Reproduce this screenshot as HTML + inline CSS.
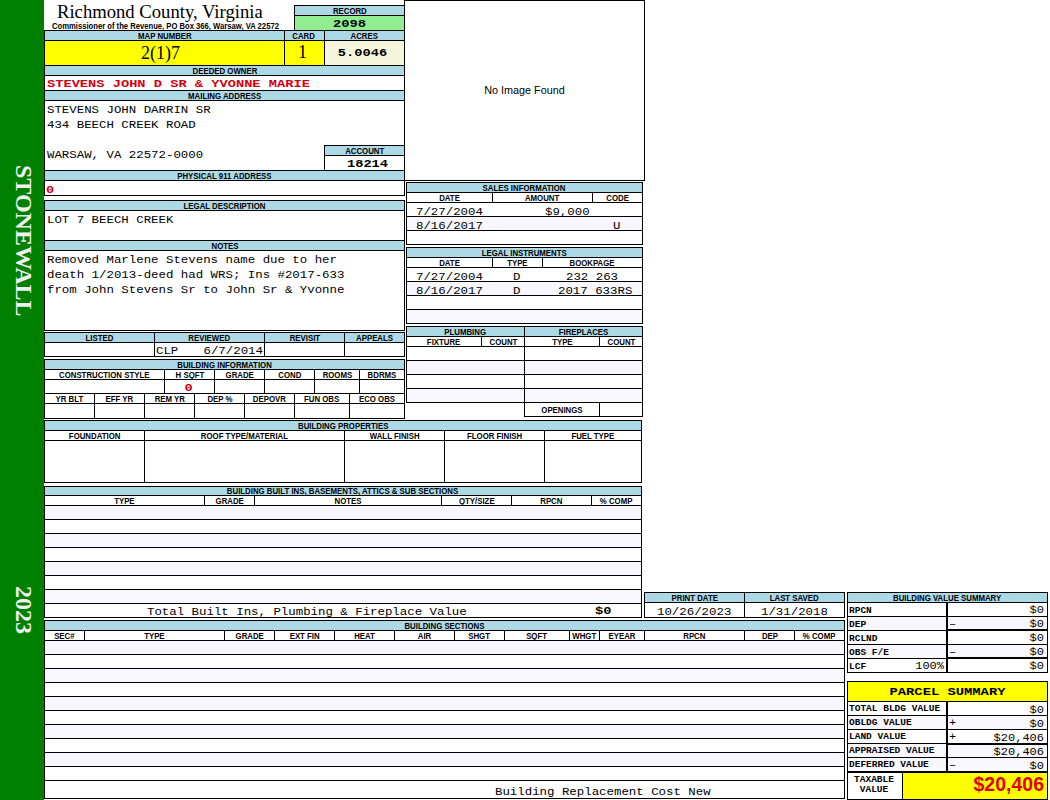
<!DOCTYPE html><html><head><meta charset="utf-8"><style>
*{margin:0;padding:0;box-sizing:border-box}
html,body{width:1050px;height:800px;overflow:hidden;background:#fff}
body{position:relative;font-family:"Liberation Sans",sans-serif}
.b{position:absolute}
.c{position:absolute;display:flex;align-items:center;white-space:nowrap;overflow:visible}
.t{position:absolute;white-space:nowrap}
.h{font-family:"Liberation Sans",sans-serif;font-size:8.7px;font-weight:bold;color:#000}
.h span{display:inline-block;transform:scaleX(0.9)}
.mb{font-family:"Liberation Mono",monospace;font-weight:bold;font-size:13.7px;color:#000}
.mbr{font-family:"Liberation Mono",monospace;font-weight:bold;font-size:13.7px;line-height:14px;color:#D40010}
.mb span,.mbr span{display:inline-block;transform:scaleY(0.85)}
.mono{font-family:"Liberation Mono",monospace;font-size:12.4px;line-height:15px;color:#000}
.mono span{display:inline-block;transform:scaleY(0.89);transform-origin:0 11px}
.ser{font-family:"Liberation Serif",serif;font-size:18px;color:#000}
.title{font-family:"Liberation Serif",serif;font-size:18.65px;line-height:20px;color:#000}
.sub{font-family:"Liberation Sans",sans-serif;font-size:8.5px;font-weight:bold;line-height:10px;color:#000}
.sub span{display:inline-block;transform:scaleX(0.9);transform-origin:0 0}
.noimg{font-family:"Liberation Sans",sans-serif;font-size:10.8px;color:#000}
.lab{font-family:"Liberation Mono",monospace;font-weight:bold;font-size:9.5px;color:#000}
.val{font-family:"Liberation Mono",monospace;font-size:12px;line-height:15px;color:#000}
.val span{display:inline-block;transform:scaleY(0.92);transform-origin:0 11px}
.ps{font-family:"Liberation Mono",monospace;font-weight:bold;font-size:13.8px;color:#000}
.ps span{display:inline-block;transform:scaleY(0.85)}
.tax{font-family:"Liberation Sans",sans-serif;font-weight:bold;font-size:19.5px;line-height:24px;color:#E00000}
.side{position:absolute;font-family:"Liberation Serif",serif;font-weight:bold;font-size:24px;line-height:24px;color:#F0F0F0;writing-mode:vertical-rl;}
</style></head><body>
<div class="b" style="left:0px;top:0px;width:44px;height:800px;background:#008000"></div>
<div class="b" style="left:404px;top:0px;width:241px;height:181px;background:#fff"></div>
<div class="b" style="left:295px;top:6px;width:109px;height:9px;background:#ADD8E6"></div>
<div class="b" style="left:295px;top:16px;width:109px;height:14px;background:#90EE90"></div>
<div class="b" style="left:45px;top:31px;width:359px;height:9px;background:#ADD8E6"></div>
<div class="b" style="left:45px;top:41px;width:239px;height:24px;background:#FFFF00"></div>
<div class="b" style="left:285px;top:41px;width:39px;height:24px;background:#FFFF00"></div>
<div class="b" style="left:325px;top:41px;width:79px;height:24px;background:#F5F5DC"></div>
<div class="b" style="left:45px;top:66px;width:359px;height:9px;background:#ADD8E6"></div>
<div class="b" style="left:45px;top:91px;width:359px;height:9px;background:#ADD8E6"></div>
<div class="b" style="left:325px;top:146px;width:79px;height:9px;background:#ADD8E6"></div>
<div class="b" style="left:45px;top:171px;width:359px;height:9px;background:#ADD8E6"></div>
<div class="b" style="left:45px;top:201px;width:359px;height:9px;background:#ADD8E6"></div>
<div class="b" style="left:45px;top:241px;width:359px;height:9px;background:#ADD8E6"></div>
<div class="b" style="left:45px;top:333px;width:359px;height:9px;background:#ADD8E6"></div>
<div class="b" style="left:45px;top:360px;width:359px;height:9px;background:#ADD8E6"></div>
<div class="b" style="left:407px;top:183px;width:235px;height:9px;background:#ADD8E6"></div>
<div class="b" style="left:407px;top:217px;width:235px;height:13px;background:#F7F7FD"></div>
<div class="b" style="left:407px;top:248px;width:235px;height:9px;background:#ADD8E6"></div>
<div class="b" style="left:407px;top:282px;width:235px;height:13px;background:#F7F7FD"></div>
<div class="b" style="left:407px;top:310px;width:235px;height:13px;background:#F7F7FD"></div>
<div class="b" style="left:407px;top:327px;width:117px;height:9px;background:#ADD8E6"></div>
<div class="b" style="left:525px;top:327px;width:117px;height:9px;background:#ADD8E6"></div>
<div class="b" style="left:407px;top:361px;width:117px;height:13px;background:#F7F7FD"></div>
<div class="b" style="left:525px;top:361px;width:117px;height:13px;background:#F7F7FD"></div>
<div class="b" style="left:407px;top:389px;width:117px;height:13px;background:#F7F7FD"></div>
<div class="b" style="left:525px;top:389px;width:117px;height:13px;background:#F7F7FD"></div>
<div class="b" style="left:45px;top:421px;width:596px;height:9px;background:#ADD8E6"></div>
<div class="b" style="left:45px;top:487px;width:596px;height:8px;background:#ADD8E6"></div>
<div class="b" style="left:45px;top:506px;width:596px;height:13px;background:#F7F7FD"></div>
<div class="b" style="left:45px;top:534px;width:596px;height:13px;background:#F7F7FD"></div>
<div class="b" style="left:45px;top:562px;width:596px;height:13px;background:#F7F7FD"></div>
<div class="b" style="left:45px;top:590px;width:596px;height:13px;background:#F7F7FD"></div>
<div class="b" style="left:645px;top:593px;width:199px;height:9px;background:#ADD8E6"></div>
<div class="b" style="left:45px;top:621px;width:799px;height:9px;background:#ADD8E6"></div>
<div class="b" style="left:45px;top:641px;width:799px;height:13px;background:#F7F7FD"></div>
<div class="b" style="left:45px;top:669px;width:799px;height:13px;background:#F7F7FD"></div>
<div class="b" style="left:45px;top:697px;width:799px;height:13px;background:#F7F7FD"></div>
<div class="b" style="left:45px;top:725px;width:799px;height:13px;background:#F7F7FD"></div>
<div class="b" style="left:45px;top:753px;width:799px;height:13px;background:#F7F7FD"></div>
<div class="b" style="left:848px;top:593px;width:199px;height:9px;background:#ADD8E6"></div>
<div class="b" style="left:848px;top:617px;width:98px;height:13px;background:#F7F7FD"></div>
<div class="b" style="left:948px;top:617px;width:99px;height:13px;background:#F7F7FD"></div>
<div class="b" style="left:848px;top:645px;width:98px;height:13px;background:#F7F7FD"></div>
<div class="b" style="left:948px;top:645px;width:99px;height:13px;background:#F7F7FD"></div>
<div class="b" style="left:848px;top:682px;width:199px;height:19px;background:#FFFF00"></div>
<div class="b" style="left:848px;top:716px;width:98px;height:13px;background:#F7F7FD"></div>
<div class="b" style="left:948px;top:716px;width:99px;height:13px;background:#F7F7FD"></div>
<div class="b" style="left:848px;top:744px;width:98px;height:13px;background:#F7F7FD"></div>
<div class="b" style="left:948px;top:744px;width:99px;height:13px;background:#F7F7FD"></div>
<div class="b" style="left:848px;top:758px;width:98px;height:13px;background:#F7F7FD"></div>
<div class="b" style="left:948px;top:758px;width:99px;height:13px;background:#F7F7FD"></div>
<div class="b" style="left:903px;top:773px;width:144px;height:26px;background:#FFFF00"></div>
<div class="b" style="left:404px;top:0px;width:241px;height:181px;border:1px solid #000"></div>
<div class="b" style="left:294px;top:5px;width:111px;height:26px;border:1px solid #000"></div>
<div class="b" style="left:294px;top:15px;width:111px;height:1px;background:#000"></div>
<div class="b" style="left:44px;top:30px;width:361px;height:166px;border:1px solid #000"></div>
<div class="b" style="left:44px;top:40px;width:361px;height:1px;background:#000"></div>
<div class="b" style="left:284px;top:30px;width:1px;height:36px;background:#000"></div>
<div class="b" style="left:324px;top:30px;width:1px;height:36px;background:#000"></div>
<div class="b" style="left:44px;top:65px;width:361px;height:1px;background:#000"></div>
<div class="b" style="left:44px;top:75px;width:361px;height:1px;background:#000"></div>
<div class="b" style="left:44px;top:90px;width:361px;height:1px;background:#000"></div>
<div class="b" style="left:44px;top:100px;width:361px;height:1px;background:#000"></div>
<div class="b" style="left:324px;top:145px;width:81px;height:26px;border:1px solid #000"></div>
<div class="b" style="left:324px;top:155px;width:81px;height:1px;background:#000"></div>
<div class="b" style="left:44px;top:170px;width:361px;height:1px;background:#000"></div>
<div class="b" style="left:44px;top:180px;width:361px;height:1px;background:#000"></div>
<div class="b" style="left:44px;top:200px;width:361px;height:131px;border:1px solid #000"></div>
<div class="b" style="left:44px;top:210px;width:361px;height:1px;background:#000"></div>
<div class="b" style="left:44px;top:240px;width:361px;height:1px;background:#000"></div>
<div class="b" style="left:44px;top:250px;width:361px;height:1px;background:#000"></div>
<div class="b" style="left:44px;top:332px;width:361px;height:25px;border:1px solid #000"></div>
<div class="b" style="left:44px;top:342px;width:361px;height:1px;background:#000"></div>
<div class="b" style="left:154px;top:332px;width:1px;height:25px;background:#000"></div>
<div class="b" style="left:264px;top:332px;width:1px;height:25px;background:#000"></div>
<div class="b" style="left:344px;top:332px;width:1px;height:25px;background:#000"></div>
<div class="b" style="left:44px;top:359px;width:361px;height:60px;border:1px solid #000"></div>
<div class="b" style="left:44px;top:369px;width:361px;height:1px;background:#000"></div>
<div class="b" style="left:44px;top:379px;width:361px;height:1px;background:#000"></div>
<div class="b" style="left:44px;top:393px;width:361px;height:1px;background:#000"></div>
<div class="b" style="left:44px;top:403px;width:361px;height:1px;background:#000"></div>
<div class="b" style="left:164px;top:369px;width:1px;height:25px;background:#000"></div>
<div class="b" style="left:214px;top:369px;width:1px;height:25px;background:#000"></div>
<div class="b" style="left:264px;top:369px;width:1px;height:25px;background:#000"></div>
<div class="b" style="left:314px;top:369px;width:1px;height:25px;background:#000"></div>
<div class="b" style="left:359px;top:369px;width:1px;height:25px;background:#000"></div>
<div class="b" style="left:94px;top:393px;width:1px;height:26px;background:#000"></div>
<div class="b" style="left:144px;top:393px;width:1px;height:26px;background:#000"></div>
<div class="b" style="left:194px;top:393px;width:1px;height:26px;background:#000"></div>
<div class="b" style="left:244px;top:393px;width:1px;height:26px;background:#000"></div>
<div class="b" style="left:294px;top:393px;width:1px;height:26px;background:#000"></div>
<div class="b" style="left:349px;top:393px;width:1px;height:26px;background:#000"></div>
<div class="b" style="left:406px;top:182px;width:237px;height:63px;border:1px solid #000"></div>
<div class="b" style="left:406px;top:192px;width:237px;height:1px;background:#000"></div>
<div class="b" style="left:406px;top:202px;width:237px;height:1px;background:#000"></div>
<div class="b" style="left:406px;top:216px;width:237px;height:1px;background:#000"></div>
<div class="b" style="left:406px;top:230px;width:237px;height:1px;background:#000"></div>
<div class="b" style="left:492px;top:192px;width:1px;height:11px;background:#000"></div>
<div class="b" style="left:592px;top:192px;width:1px;height:11px;background:#000"></div>
<div class="b" style="left:406px;top:247px;width:237px;height:77px;border:1px solid #000"></div>
<div class="b" style="left:406px;top:257px;width:237px;height:1px;background:#000"></div>
<div class="b" style="left:406px;top:267px;width:237px;height:1px;background:#000"></div>
<div class="b" style="left:406px;top:281px;width:237px;height:1px;background:#000"></div>
<div class="b" style="left:406px;top:295px;width:237px;height:1px;background:#000"></div>
<div class="b" style="left:406px;top:309px;width:237px;height:1px;background:#000"></div>
<div class="b" style="left:492px;top:257px;width:1px;height:11px;background:#000"></div>
<div class="b" style="left:542px;top:257px;width:1px;height:11px;background:#000"></div>
<div class="b" style="left:406px;top:326px;width:119px;height:77px;border:1px solid #000"></div>
<div class="b" style="left:524px;top:326px;width:119px;height:91px;border:1px solid #000"></div>
<div class="b" style="left:406px;top:336px;width:237px;height:1px;background:#000"></div>
<div class="b" style="left:406px;top:346px;width:237px;height:1px;background:#000"></div>
<div class="b" style="left:406px;top:360px;width:237px;height:1px;background:#000"></div>
<div class="b" style="left:406px;top:374px;width:237px;height:1px;background:#000"></div>
<div class="b" style="left:406px;top:388px;width:237px;height:1px;background:#000"></div>
<div class="b" style="left:524px;top:402px;width:119px;height:1px;background:#000"></div>
<div class="b" style="left:481px;top:336px;width:1px;height:11px;background:#000"></div>
<div class="b" style="left:599px;top:336px;width:1px;height:11px;background:#000"></div>
<div class="b" style="left:599px;top:402px;width:1px;height:15px;background:#000"></div>
<div class="b" style="left:44px;top:420px;width:598px;height:63px;border:1px solid #000"></div>
<div class="b" style="left:44px;top:430px;width:598px;height:1px;background:#000"></div>
<div class="b" style="left:44px;top:440px;width:598px;height:1px;background:#000"></div>
<div class="b" style="left:144px;top:430px;width:1px;height:53px;background:#000"></div>
<div class="b" style="left:344px;top:430px;width:1px;height:53px;background:#000"></div>
<div class="b" style="left:444px;top:430px;width:1px;height:53px;background:#000"></div>
<div class="b" style="left:544px;top:430px;width:1px;height:53px;background:#000"></div>
<div class="b" style="left:44px;top:486px;width:598px;height:132px;border:1px solid #000"></div>
<div class="b" style="left:44px;top:495px;width:598px;height:1px;background:#000"></div>
<div class="b" style="left:44px;top:505px;width:598px;height:1px;background:#000"></div>
<div class="b" style="left:204px;top:495px;width:1px;height:11px;background:#000"></div>
<div class="b" style="left:254px;top:495px;width:1px;height:11px;background:#000"></div>
<div class="b" style="left:441px;top:495px;width:1px;height:11px;background:#000"></div>
<div class="b" style="left:511px;top:495px;width:1px;height:11px;background:#000"></div>
<div class="b" style="left:591px;top:495px;width:1px;height:11px;background:#000"></div>
<div class="b" style="left:44px;top:519px;width:598px;height:1px;background:#000"></div>
<div class="b" style="left:44px;top:533px;width:598px;height:1px;background:#000"></div>
<div class="b" style="left:44px;top:547px;width:598px;height:1px;background:#000"></div>
<div class="b" style="left:44px;top:561px;width:598px;height:1px;background:#000"></div>
<div class="b" style="left:44px;top:575px;width:598px;height:1px;background:#000"></div>
<div class="b" style="left:44px;top:589px;width:598px;height:1px;background:#000"></div>
<div class="b" style="left:44px;top:603px;width:598px;height:1px;background:#000"></div>
<div class="b" style="left:644px;top:592px;width:201px;height:26px;border:1px solid #000"></div>
<div class="b" style="left:644px;top:602px;width:201px;height:1px;background:#000"></div>
<div class="b" style="left:744px;top:592px;width:1px;height:26px;background:#000"></div>
<div class="b" style="left:44px;top:620px;width:801px;height:179px;border:1px solid #000"></div>
<div class="b" style="left:44px;top:630px;width:801px;height:1px;background:#000"></div>
<div class="b" style="left:44px;top:640px;width:801px;height:1px;background:#000"></div>
<div class="b" style="left:84px;top:630px;width:1px;height:11px;background:#000"></div>
<div class="b" style="left:224px;top:630px;width:1px;height:11px;background:#000"></div>
<div class="b" style="left:274px;top:630px;width:1px;height:11px;background:#000"></div>
<div class="b" style="left:334px;top:630px;width:1px;height:11px;background:#000"></div>
<div class="b" style="left:394px;top:630px;width:1px;height:11px;background:#000"></div>
<div class="b" style="left:454px;top:630px;width:1px;height:11px;background:#000"></div>
<div class="b" style="left:504px;top:630px;width:1px;height:11px;background:#000"></div>
<div class="b" style="left:569px;top:630px;width:1px;height:11px;background:#000"></div>
<div class="b" style="left:599px;top:630px;width:1px;height:11px;background:#000"></div>
<div class="b" style="left:644px;top:630px;width:1px;height:11px;background:#000"></div>
<div class="b" style="left:744px;top:630px;width:1px;height:11px;background:#000"></div>
<div class="b" style="left:794px;top:630px;width:1px;height:11px;background:#000"></div>
<div class="b" style="left:44px;top:654px;width:801px;height:1px;background:#000"></div>
<div class="b" style="left:44px;top:668px;width:801px;height:1px;background:#000"></div>
<div class="b" style="left:44px;top:682px;width:801px;height:1px;background:#000"></div>
<div class="b" style="left:44px;top:696px;width:801px;height:1px;background:#000"></div>
<div class="b" style="left:44px;top:710px;width:801px;height:1px;background:#000"></div>
<div class="b" style="left:44px;top:724px;width:801px;height:1px;background:#000"></div>
<div class="b" style="left:44px;top:738px;width:801px;height:1px;background:#000"></div>
<div class="b" style="left:44px;top:752px;width:801px;height:1px;background:#000"></div>
<div class="b" style="left:44px;top:766px;width:801px;height:1px;background:#000"></div>
<div class="b" style="left:44px;top:780px;width:801px;height:1px;background:#000"></div>
<div class="b" style="left:847px;top:592px;width:201px;height:81px;border:1px solid #000"></div>
<div class="b" style="left:847px;top:602px;width:201px;height:1px;background:#000"></div>
<div class="b" style="left:847px;top:616px;width:201px;height:1px;background:#000"></div>
<div class="b" style="left:847px;top:644px;width:201px;height:1px;background:#000"></div>
<div class="b" style="left:847px;top:672px;width:201px;height:1px;background:#000"></div>
<div class="b" style="left:847px;top:630px;width:100px;height:1px;background:#000"></div>
<div class="b" style="left:847px;top:658px;width:100px;height:1px;background:#000"></div>
<div class="b" style="left:946px;top:629px;width:102px;height:2px;background:#000"></div>
<div class="b" style="left:946px;top:657px;width:102px;height:2px;background:#000"></div>
<div class="b" style="left:946px;top:602px;width:2px;height:71px;background:#000"></div>
<div class="b" style="left:847px;top:681px;width:201px;height:119px;border:1px solid #000"></div>
<div class="b" style="left:847px;top:701px;width:201px;height:1px;background:#000"></div>
<div class="b" style="left:847px;top:715px;width:201px;height:1px;background:#000"></div>
<div class="b" style="left:847px;top:729px;width:201px;height:1px;background:#000"></div>
<div class="b" style="left:847px;top:757px;width:201px;height:1px;background:#000"></div>
<div class="b" style="left:946px;top:743px;width:102px;height:2px;background:#000"></div>
<div class="b" style="left:847px;top:743px;width:100px;height:1px;background:#000"></div>
<div class="b" style="left:847px;top:771px;width:201px;height:2px;background:#000"></div>
<div class="b" style="left:946px;top:701px;width:2px;height:71px;background:#000"></div>
<div class="b" style="left:902px;top:772px;width:1px;height:28px;background:#000"></div>
<div class="t title" style="left:57px;top:2px;"><span>Richmond County, Virginia</span></div>
<div class="t sub" style="left:52px;top:21px;"><span>Commissioner of the Revenue, PO Box 366, Warsaw, VA 22572</span></div>
<div class="c noimg" style="left:405px;top:0px;width:239px;height:179px;justify-content:center;"><span>No Image Found</span></div>
<div class="c h" style="left:295px;top:6px;width:109px;height:9px;justify-content:center;"><span>RECORD</span></div>
<div class="c mb" style="left:295px;top:17px;width:109px;height:14px;justify-content:center;"><span>2098</span></div>
<div class="c h" style="left:45px;top:31px;width:239px;height:9px;justify-content:center;"><span>MAP NUMBER</span></div>
<div class="c h" style="left:284px;top:31px;width:39px;height:9px;justify-content:center;"><span>CARD</span></div>
<div class="c h" style="left:325px;top:31px;width:79px;height:9px;justify-content:center;"><span>ACRES</span></div>
<div class="c ser" style="left:41px;top:41px;width:239px;height:24px;justify-content:center;"><span>2(1)7</span></div>
<div class="c ser" style="left:283px;top:40px;width:39px;height:24px;justify-content:center;"><span>1</span></div>
<div class="c mb" style="left:323px;top:41px;width:79px;height:24px;justify-content:center;"><span>5.0046</span></div>
<div class="c h" style="left:45px;top:66px;width:359px;height:9px;justify-content:center;"><span>DEEDED OWNER</span></div>
<div class="t mbr" style="left:47px;top:77px;"><span>STEVENS JOHN D SR &amp; YVONNE MARIE</span></div>
<div class="c h" style="left:45px;top:91px;width:359px;height:9px;justify-content:center;"><span>MAILING ADDRESS</span></div>
<div class="t mono" style="left:47px;top:103px;"><span>STEVENS JOHN DARRIN SR</span></div>
<div class="t mono" style="left:47px;top:118px;"><span>434 BEECH CREEK ROAD</span></div>
<div class="t mono" style="left:47px;top:148px;"><span>WARSAW, VA 22572-0000</span></div>
<div class="c h" style="left:325px;top:146px;width:79px;height:9px;justify-content:center;"><span>ACCOUNT</span></div>
<div class="c mb" style="left:328px;top:157px;width:79px;height:14px;justify-content:center;"><span>18214</span></div>
<div class="c h" style="left:45px;top:171px;width:359px;height:9px;justify-content:center;"><span>PHYSICAL 911 ADDRESS</span></div>
<div class="t mbr" style="left:46px;top:183px;"><span>0</span></div>
<div class="c h" style="left:45px;top:201px;width:359px;height:9px;justify-content:center;"><span>LEGAL DESCRIPTION</span></div>
<div class="t mono" style="left:47px;top:213px;"><span>LOT 7 BEECH CREEK</span></div>
<div class="c h" style="left:45px;top:241px;width:359px;height:9px;justify-content:center;"><span>NOTES</span></div>
<div class="t mono" style="left:47px;top:253px;"><span>Removed Marlene Stevens name due to her</span></div>
<div class="t mono" style="left:47px;top:268px;"><span>death 1/2013-deed had WRS; Ins #2017-633</span></div>
<div class="t mono" style="left:47px;top:283px;"><span>from John Stevens Sr to John Sr &amp; Yvonne</span></div>
<div class="c h" style="left:45px;top:333px;width:109px;height:9px;justify-content:center;"><span>LISTED</span></div>
<div class="c h" style="left:155px;top:333px;width:109px;height:9px;justify-content:center;"><span>REVIEWED</span></div>
<div class="c h" style="left:265px;top:333px;width:79px;height:9px;justify-content:center;"><span>REVISIT</span></div>
<div class="c h" style="left:345px;top:333px;width:59px;height:9px;justify-content:center;"><span>APPEALS</span></div>
<div class="t mono" style="left:156px;top:344px;"><span>CLP</span></div>
<div class="t mono" style="right:787px;top:344px;"><span>6/7/2014</span></div>
<div class="c h" style="left:45px;top:360px;width:359px;height:9px;justify-content:center;"><span>BUILDING INFORMATION</span></div>
<div class="c h" style="left:45px;top:370px;width:119px;height:9px;justify-content:center;"><span>CONSTRUCTION STYLE</span></div>
<div class="c h" style="left:165px;top:370px;width:49px;height:9px;justify-content:center;"><span>H SQFT</span></div>
<div class="c h" style="left:215px;top:370px;width:49px;height:9px;justify-content:center;"><span>GRADE</span></div>
<div class="c h" style="left:265px;top:370px;width:49px;height:9px;justify-content:center;"><span>COND</span></div>
<div class="c h" style="left:315px;top:370px;width:44px;height:9px;justify-content:center;"><span>ROOMS</span></div>
<div class="c h" style="left:360px;top:370px;width:44px;height:9px;justify-content:center;"><span>BDRMS</span></div>
<div class="c mbr" style="left:164px;top:381px;width:49px;height:13px;justify-content:center;"><span>0</span></div>
<div class="c h" style="left:45px;top:394px;width:49px;height:9px;justify-content:center;"><span>YR BLT</span></div>
<div class="c h" style="left:95px;top:394px;width:49px;height:9px;justify-content:center;"><span>EFF YR</span></div>
<div class="c h" style="left:145px;top:394px;width:49px;height:9px;justify-content:center;"><span>REM YR</span></div>
<div class="c h" style="left:195px;top:394px;width:49px;height:9px;justify-content:center;"><span>DEP %</span></div>
<div class="c h" style="left:245px;top:394px;width:49px;height:9px;justify-content:center;"><span>DEPOVR</span></div>
<div class="c h" style="left:295px;top:394px;width:54px;height:9px;justify-content:center;"><span>FUN OBS</span></div>
<div class="c h" style="left:350px;top:394px;width:54px;height:9px;justify-content:center;"><span>ECO OBS</span></div>
<div class="c h" style="left:407px;top:183px;width:235px;height:9px;justify-content:center;"><span>SALES INFORMATION</span></div>
<div class="c h" style="left:407px;top:193px;width:85px;height:9px;justify-content:center;"><span>DATE</span></div>
<div class="c h" style="left:493px;top:193px;width:99px;height:9px;justify-content:center;"><span>AMOUNT</span></div>
<div class="c h" style="left:593px;top:193px;width:49px;height:9px;justify-content:center;"><span>CODE</span></div>
<div class="t mono" style="left:416px;top:205px;"><span>7/27/2004</span></div>
<div class="t mono" style="left:545px;top:205px;"><span>$9,000</span></div>
<div class="t mono" style="left:416px;top:219px;"><span>8/16/2017</span></div>
<div class="t mono" style="left:613px;top:219px;"><span>U</span></div>
<div class="c h" style="left:407px;top:248px;width:235px;height:9px;justify-content:center;"><span>LEGAL INSTRUMENTS</span></div>
<div class="c h" style="left:407px;top:258px;width:85px;height:9px;justify-content:center;"><span>DATE</span></div>
<div class="c h" style="left:493px;top:258px;width:49px;height:9px;justify-content:center;"><span>TYPE</span></div>
<div class="c h" style="left:543px;top:258px;width:99px;height:9px;justify-content:center;"><span>BOOKPAGE</span></div>
<div class="t mono" style="left:416px;top:270px;"><span>7/27/2004</span></div>
<div class="t mono" style="left:513px;top:270px;"><span>D</span></div>
<div class="t mono" style="left:566px;top:270px;"><span>232 263</span></div>
<div class="t mono" style="left:416px;top:284px;"><span>8/16/2017</span></div>
<div class="t mono" style="left:513px;top:284px;"><span>D</span></div>
<div class="t mono" style="left:558px;top:284px;"><span>2017 633RS</span></div>
<div class="c h" style="left:407px;top:327px;width:117px;height:9px;justify-content:center;"><span>PLUMBING</span></div>
<div class="c h" style="left:525px;top:327px;width:117px;height:9px;justify-content:center;"><span>FIREPLACES</span></div>
<div class="c h" style="left:407px;top:337px;width:74px;height:9px;justify-content:center;"><span>FIXTURE</span></div>
<div class="c h" style="left:482px;top:337px;width:42px;height:9px;justify-content:center;"><span>COUNT</span></div>
<div class="c h" style="left:525px;top:337px;width:74px;height:9px;justify-content:center;"><span>TYPE</span></div>
<div class="c h" style="left:600px;top:337px;width:42px;height:9px;justify-content:center;"><span>COUNT</span></div>
<div class="c h" style="left:525px;top:403px;width:74px;height:13px;justify-content:center;"><span>OPENINGS</span></div>
<div class="c h" style="left:45px;top:421px;width:596px;height:9px;justify-content:center;"><span>BUILDING PROPERTIES</span></div>
<div class="c h" style="left:45px;top:431px;width:99px;height:9px;justify-content:center;"><span>FOUNDATION</span></div>
<div class="c h" style="left:145px;top:431px;width:199px;height:9px;justify-content:center;"><span>ROOF TYPE/MATERIAL</span></div>
<div class="c h" style="left:345px;top:431px;width:99px;height:9px;justify-content:center;"><span>WALL FINISH</span></div>
<div class="c h" style="left:445px;top:431px;width:99px;height:9px;justify-content:center;"><span>FLOOR FINISH</span></div>
<div class="c h" style="left:545px;top:431px;width:96px;height:9px;justify-content:center;"><span>FUEL TYPE</span></div>
<div class="c h" style="left:45px;top:487px;width:596px;height:8px;justify-content:center;"><span>BUILDING BUILT INS, BASEMENTS, ATTICS &amp; SUB SECTIONS</span></div>
<div class="c h" style="left:45px;top:496px;width:159px;height:9px;justify-content:center;"><span>TYPE</span></div>
<div class="c h" style="left:205px;top:496px;width:49px;height:9px;justify-content:center;"><span>GRADE</span></div>
<div class="c h" style="left:255px;top:496px;width:186px;height:9px;justify-content:center;"><span>NOTES</span></div>
<div class="c h" style="left:442px;top:496px;width:69px;height:9px;justify-content:center;"><span>QTY/SIZE</span></div>
<div class="c h" style="left:512px;top:496px;width:79px;height:9px;justify-content:center;"><span>RPCN</span></div>
<div class="c h" style="left:592px;top:496px;width:49px;height:9px;justify-content:center;"><span>% COMP</span></div>
<div class="t mono" style="left:147px;top:605px;"><span>Total Built Ins, Plumbing &amp; Fireplace Value</span></div>
<div class="t mb" style="left:595px;top:604px;"><span>$0</span></div>
<div class="c h" style="left:645px;top:593px;width:99px;height:9px;justify-content:center;"><span>PRINT DATE</span></div>
<div class="c h" style="left:745px;top:593px;width:99px;height:9px;justify-content:center;"><span>LAST SAVED</span></div>
<div class="t mono" style="left:657px;top:605px;"><span>10/26/2023</span></div>
<div class="t mono" style="left:761px;top:605px;"><span>1/31/2018</span></div>
<div class="c h" style="left:45px;top:621px;width:799px;height:9px;justify-content:center;"><span>BUILDING SECTIONS</span></div>
<div class="c h" style="left:45px;top:631px;width:39px;height:9px;justify-content:center;"><span>SEC#</span></div>
<div class="c h" style="left:85px;top:631px;width:139px;height:9px;justify-content:center;"><span>TYPE</span></div>
<div class="c h" style="left:225px;top:631px;width:49px;height:9px;justify-content:center;"><span>GRADE</span></div>
<div class="c h" style="left:275px;top:631px;width:59px;height:9px;justify-content:center;"><span>EXT FIN</span></div>
<div class="c h" style="left:335px;top:631px;width:59px;height:9px;justify-content:center;"><span>HEAT</span></div>
<div class="c h" style="left:395px;top:631px;width:59px;height:9px;justify-content:center;"><span>AIR</span></div>
<div class="c h" style="left:455px;top:631px;width:49px;height:9px;justify-content:center;"><span>SHGT</span></div>
<div class="c h" style="left:505px;top:631px;width:64px;height:9px;justify-content:center;"><span>SQFT</span></div>
<div class="c h" style="left:570px;top:631px;width:29px;height:9px;justify-content:center;"><span>WHGT</span></div>
<div class="c h" style="left:600px;top:631px;width:44px;height:9px;justify-content:center;"><span>EYEAR</span></div>
<div class="c h" style="left:645px;top:631px;width:99px;height:9px;justify-content:center;"><span>RPCN</span></div>
<div class="c h" style="left:745px;top:631px;width:49px;height:9px;justify-content:center;"><span>DEP</span></div>
<div class="c h" style="left:795px;top:631px;width:49px;height:9px;justify-content:center;"><span>% COMP</span></div>
<div class="t mono" style="left:495px;top:785px;"><span>Building Replacement Cost New</span></div>
<div class="c h" style="left:848px;top:593px;width:199px;height:9px;justify-content:center;"><span>BUILDING VALUE SUMMARY</span></div>
<div class="c lab" style="left:849px;top:604px;width:98px;height:13px;justify-content:flex-start;"><span>RPCN</span></div>
<div class="t val" style="right:6px;top:603px;"><span>$0</span></div>
<div class="c lab" style="left:849px;top:618px;width:98px;height:13px;justify-content:flex-start;"><span>DEP</span></div>
<div class="t val" style="right:6px;top:617px;"><span>$0</span></div>
<div class="c lab" style="left:849px;top:632px;width:98px;height:13px;justify-content:flex-start;"><span>RCLND</span></div>
<div class="t val" style="right:6px;top:631px;"><span>$0</span></div>
<div class="c lab" style="left:849px;top:646px;width:98px;height:13px;justify-content:flex-start;"><span>OBS F/E</span></div>
<div class="t val" style="right:6px;top:645px;"><span>$0</span></div>
<div class="c lab" style="left:849px;top:660px;width:98px;height:13px;justify-content:flex-start;"><span>LCF</span></div>
<div class="t val" style="right:6px;top:659px;"><span>$0</span></div>
<div class="t val" style="left:949px;top:617px;"><span>&ndash;</span></div>
<div class="t val" style="left:949px;top:645px;"><span>&ndash;</span></div>
<div class="t val" style="right:106px;top:659px;"><span>100%</span></div>
<div class="c ps" style="left:848px;top:683px;width:199px;height:19px;justify-content:center;"><span>PARCEL SUMMARY</span></div>
<div class="c lab" style="left:849px;top:702px;width:98px;height:13px;justify-content:flex-start;"><span>TOTAL BLDG VALUE</span></div>
<div class="t val" style="right:6px;top:703px;"><span>$0</span></div>
<div class="c lab" style="left:849px;top:716px;width:98px;height:13px;justify-content:flex-start;"><span>OBLDG VALUE</span></div>
<div class="t val" style="right:6px;top:717px;"><span>$0</span></div>
<div class="t val" style="left:949px;top:716px;"><span>+</span></div>
<div class="c lab" style="left:849px;top:730px;width:98px;height:13px;justify-content:flex-start;"><span>LAND VALUE</span></div>
<div class="t val" style="right:6px;top:731px;"><span>$20,406</span></div>
<div class="t val" style="left:949px;top:730px;"><span>+</span></div>
<div class="c lab" style="left:849px;top:744px;width:98px;height:13px;justify-content:flex-start;"><span>APPRAISED VALUE</span></div>
<div class="t val" style="right:6px;top:745px;"><span>$20,406</span></div>
<div class="c lab" style="left:849px;top:758px;width:98px;height:13px;justify-content:flex-start;"><span>DEFERRED VALUE</span></div>
<div class="t val" style="right:6px;top:759px;"><span>$0</span></div>
<div class="t val" style="left:949px;top:758px;"><span>&ndash;</span></div>
<div class="c lab" style="left:847px;top:772px;width:54px;height:26px;justify-content:center;text-align:center;line-height:10px"><span>TAXABLE<br>VALUE</span></div>
<div class="t tax" style="right:6px;top:772px;"><span>$20,406</span></div>
<div class="side" style="left:12px;top:165px;">STONEWALL</div>
<div class="side" style="left:12px;top:586px;">2023</div>
</body></html>
